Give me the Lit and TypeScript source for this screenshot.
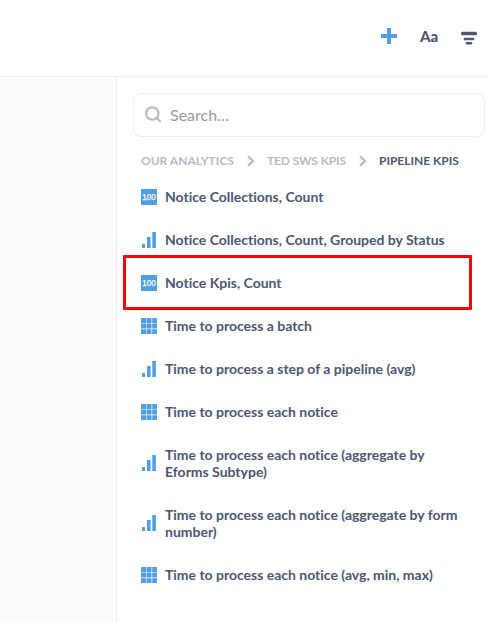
import { LitElement, html, css, svg } from "lit";
import { customElement } from "lit/decorators.js";

type Kind = "number" | "bar" | "table";
interface Entry { kind: Kind; name: string; marked?: boolean }

const ENTRIES: Entry[] = [
  { kind: "number", name: "Notice Collections, Count" },
  { kind: "bar", name: "Notice Collections, Count, Grouped by Status" },
  { kind: "number", name: "Notice Kpis, Count", marked: true },
  { kind: "table", name: "Time to process a batch" },
  { kind: "bar", name: "Time to process a step of a pipeline (avg)" },
  { kind: "table", name: "Time to process each notice" },
  { kind: "bar", name: "Time to process each notice (aggregate by Eforms Subtype)" },
  { kind: "bar", name: "Time to process each notice (aggregate by form number)" },
  { kind: "table", name: "Time to process each notice (avg, min, max)" },
];

const SHAPES = {
  number: svg`<rect width="16" height="16"/><text class="digits" x="8" y="11" text-anchor="middle" textLength="13.4" lengthAdjust="spacingAndGlyphs">100</text>`,
  bar: svg`<rect x="1" y="12" width="3" height="4"/><rect x="6" y="5" width="3.6" height="11"/><rect x="11.3" y="0" width="3.6" height="16"/>`,
  table: svg`<path d="M0 0h5v5H0zM5.5 0h5v5h-5zM11.2 0H16v5h-4.8zM0 5.6h5v4.9H0zM5.5 5.6h5v4.9h-5zM11.2 5.6H16v4.9h-4.8zM0 11.2h5V16H0zM5.5 11.2h5V16h-5zM11.2 11.2H16V16h-4.8z"/>`,
};

@customElement("app-root")
export class AppRoot extends LitElement {
  static styles = css`
    :host { display: flex; flex-direction: column; height: 622px; overflow: hidden; background: #fff; color: #4c5773; font-family: Lato, "Liberation Sans", sans-serif; font-variant-ligatures: none; }
    * { box-sizing: border-box; }
    svg { display: block; flex: none; }
    .header { display: flex; justify-content: flex-end; align-items: flex-start; height: 77px; padding: 28px 11px 0 0; border-bottom: 1px solid #eeecec; flex: none; }
    .plus { fill: #509ee3; margin-right: 23px; }
    .aa { font-size: 15px; line-height: 17px; font-weight: 900; width: 18px; margin-right: 23px; }
    .filter { fill: #4c5773; }
    .body { display: flex; flex: 1; min-height: 0; }
    .canvas { width: 117px; flex: none; background: #f9fbfc; border-right: 1px solid #eeecec; }
    .panel { flex: 1; min-width: 0; padding-top: 16px; }
    .search { display: flex; align-items: center; height: 44px; margin: 0 3px 0 16px; padding: 0 0 2px 11px; border: 1px solid #eeecec; border-radius: 8px; font-size: 16px; color: #949aab; }
    .search svg { margin-right: 8px; }
    .crumbs { display: flex; align-items: center; height: 16px; margin: 16px 0 0 24px; font-size: 12px; line-height: 16px; font-weight: 700; color: #b8bbc3; white-space: nowrap; }
    .crumbs svg { margin: 0 12px; }
    .short { letter-spacing: -0.12px; }
    .current { color: #4c5773; }
    .list { margin: 6px 0 0; padding: 0; list-style: none; }
    .item { position: relative; display: flex; align-items: center; padding: 13px 16px 13px 24px; font-size: 14px; line-height: 17px; font-weight: 700; }
    .item svg { margin-right: 8px; fill: #509ee3; }
    .name { max-width: 300px; letter-spacing: -0.01px; }
    .digits { fill: #fff; stroke: #fff; stroke-width: 0.25px; font: 400 8.5px "Liberation Sans", sans-serif; }
    .mark { position: absolute; left: 6px; top: -6px; width: 349px; height: 55px; border: 3px solid #f00; border-radius: 1px; }
  `;

  private chevron() {
    return html`<svg width="9" height="12" viewBox="0 0 9 12" fill="none" stroke="#b8bbc3" stroke-width="2.2"><path d="M2 1.2 6.8 6 2 10.8"/></svg>`;
  }

  render() {
    return html`
      <div class="header">
        <svg class="plus" width="16" height="16" viewBox="0 0 16 16"><path d="M6.1 0h3.8v6.1H16v3.8H9.9V16H6.1V9.9H0V6.1h6.1z"/></svg>
        <span class="aa">Aa</span>
        <svg class="filter" width="16" height="17" viewBox="0 0 16 17"><rect y="3.8" width="16" height="3.4" rx="1.5"/><rect x="2.6" y="9.7" width="10.8" height="2.5" rx="1.2"/><rect x="4.8" y="14" width="6.4" height="2.5" rx="1.2"/></svg>
      </div>
      <div class="body">
        <div class="canvas"></div>
        <div class="panel">
          <div class="search">
            <svg width="17" height="17" viewBox="0 0 17 17" fill="none" stroke="#b8bbc3" stroke-width="2.2"><circle cx="7.3" cy="7.5" r="6.2"/><path d="m11.7 12 4 4"/></svg>
            <span>Search…</span>
          </div>
          <div class="crumbs">
            <span>OUR ANALYTICS</span>${this.chevron()}<span class="short">TED SWS KPIS</span>${this.chevron()}<span class="current">PIPELINE KPIS</span>
          </div>
          <ul class="list">
            ${ENTRIES.map((e) => html`<li class="item">
              <svg width="16" height="16" viewBox="0 0 16 16">${SHAPES[e.kind]}</svg>
              <span class="name">${e.name}</span>
              ${e.marked ? html`<span class="mark"></span>` : null}
            </li>`)}
          </ul>
        </div>
      </div>`;
  }
}
